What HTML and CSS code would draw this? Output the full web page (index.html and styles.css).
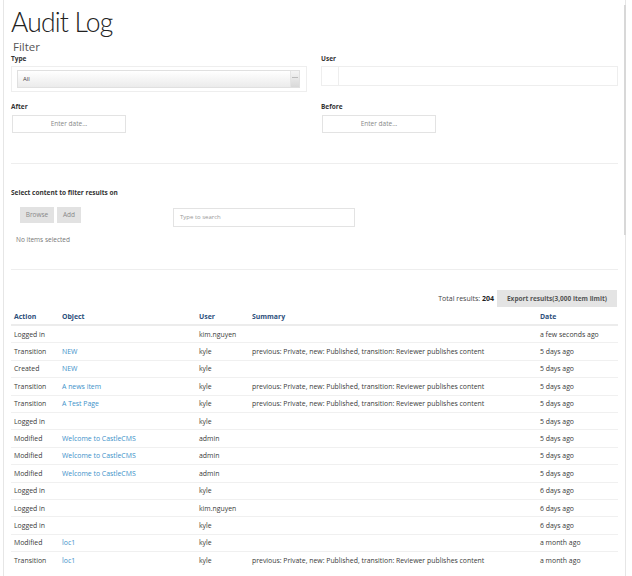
FILE: index.html
```html
<!DOCTYPE html>
<html>
<head>
<meta charset="utf-8">
<link rel="stylesheet" href="styles.css">
</head>
<body>
<div class="page">
  <h1 class="title">Audit Log</h1>
  <div class="filter-head">Filter</div>
  <div class="grid">
    <div class="field">
      <label class="lbl">Type</label>
      <div class="select-wrap">
        <div class="select"><span>All</span><span class="arrow"><span class="caret"></span></span></div>
      </div>
    </div>
    <div class="field">
      <label class="lbl">User</label>
      <div class="user-input"><span class="user-tag"></span></div>
    </div>
    <div class="field f2">
      <label class="lbl">After</label>
      <div class="date">Enter date...</div>
    </div>
    <div class="field f2">
      <label class="lbl">Before</label>
      <div class="date">Enter date...</div>
    </div>
  </div>
  <hr class="rule r1">
  <div class="content-sel">
    <div class="lbl">Select content to filter results on</div>
    <div class="sel-row">
      <div class="btns"><span class="btn b-browse">Browse</span><span class="btn b-add">Add</span></div>
      <div class="search">Type to search</div>
    </div>
    <div class="none">No items selected</div>
  </div>
  <hr class="rule r2">
  <div class="total-row">
    <span class="total">Total results: <b>204</b></span>
    <span class="export">Export results(3,000 item limit)</span>
  </div>
  <table class="log">
    <colgroup><col class="c1"><col class="c2"><col class="c3"><col class="c4"><col class="c5"></colgroup>
    <thead><tr><th>Action</th><th>Object</th><th>User</th><th>Summary</th><th>Date</th></tr></thead>
    <tbody>
      <tr><td>Logged in</td><td></td><td>kim.nguyen</td><td></td><td>a few seconds ago</td></tr>
      <tr><td>Transition</td><td><a>NEW</a></td><td>kyle</td><td>previous: Private, new: Published, transition: Reviewer publishes content</td><td>5 days ago</td></tr>
      <tr><td>Created</td><td><a>NEW</a></td><td>kyle</td><td></td><td>5 days ago</td></tr>
      <tr><td>Transition</td><td><a>A news item</a></td><td>kyle</td><td>previous: Private, new: Published, transition: Reviewer publishes content</td><td>5 days ago</td></tr>
      <tr><td>Transition</td><td><a>A Test Page</a></td><td>kyle</td><td>previous: Private, new: Published, transition: Reviewer publishes content</td><td>5 days ago</td></tr>
      <tr><td>Logged in</td><td></td><td>kyle</td><td></td><td>5 days ago</td></tr>
      <tr><td>Modified</td><td><a>Welcome to CastleCMS</a></td><td>admin</td><td></td><td>5 days ago</td></tr>
      <tr><td>Modified</td><td><a>Welcome to CastleCMS</a></td><td>admin</td><td></td><td>5 days ago</td></tr>
      <tr><td>Modified</td><td><a>Welcome to CastleCMS</a></td><td>admin</td><td></td><td>5 days ago</td></tr>
      <tr><td>Logged in</td><td></td><td>kyle</td><td></td><td>6 days ago</td></tr>
      <tr><td>Logged in</td><td></td><td>kim.nguyen</td><td></td><td>6 days ago</td></tr>
      <tr><td>Logged in</td><td></td><td>kyle</td><td></td><td>6 days ago</td></tr>
      <tr><td>Modified</td><td><a>loc1</a></td><td>kyle</td><td></td><td>a month ago</td></tr>
      <tr><td>Transition</td><td><a>loc1</a></td><td>kyle</td><td>previous: Private, new: Published, transition: Reviewer publishes content</td><td>a month ago</td></tr>
    </tbody>
  </table>
</div>
<div class="scroll-thumb"></div>
</body>
</html>
```
FILE: styles.css
```css
html, body { margin: 0; padding: 0; background: #fff; }
body { font-family: "Open Sans", "Liberation Sans", sans-serif; color: #444; font-size: 7px; height: 576px; overflow: hidden; position: relative; }
.page { margin-left: 3px; width: 607px; padding: 0 7px; border-left: 1px solid #e6e6e6; border-right: 1px solid #e6e6e6; min-height: 576px; box-sizing: content-box; }
.title { margin: 0; padding-top: 6px; font-family: Lato, "Liberation Sans", sans-serif; font-weight: 300; font-size: 26.5px; line-height: 32px; color: #222; letter-spacing: -0.8px; }
.filter-head { margin: 2px 0 0 2px; font-size: 11.5px; line-height: 14px; color: #555; }
.grid { display: grid; grid-template-columns: 296px 297px; column-gap: 14px; }
.lbl { display: block; font-weight: 700; font-size: 6.5px; line-height: 10px; color: #333; }
.field { display: flex; flex-direction: column; }
.f2 { margin-top: 10px; }
.f2 .lbl { margin-bottom: 3px; }
.select-wrap { margin-top: 2px; height: 26px; border: 1px solid #eee; box-sizing: border-box; padding: 3px 6px 3px 5px; }
.select { height: 18px; border: 1px solid #e0e0e0; box-sizing: border-box; background: linear-gradient(#fff, #ebebeb); display: flex; justify-content: space-between; align-items: stretch; font-size: 6px; color: #444; }
.select span:first-child { padding-left: 5px; line-height: 16px; }
.arrow { width: 8px; background: linear-gradient(#f4f4f4, #d9d9d9); border-left: 1px solid #e4e4e4; display: flex; align-items: flex-start; justify-content: center; }
.caret { width: 1px; height: 1px; background: #bbb; margin-top: 6px; }
.user-input { margin-top: 2px; height: 20px; border: 1px solid #eee; box-sizing: border-box; display: flex; }
.user-tag { width: 16px; border-right: 1px solid #eee; }
.date { margin-left: 1px; width: 114px; height: 18px; border: 1px solid #e3e3e3; box-sizing: border-box; text-align: center; font-size: 6.5px; line-height: 16px; color: #888; }
.rule { border: 0; border-top: 1px solid #eee; margin: 0; }
.r1 { margin-top: 30px; }
.content-sel { padding-top: 24px; }
.sel-row { display: flex; margin-top: 9px; }
.btns { display: flex; gap: 3px; margin-left: 9px; width: 153px; }
.btn { height: 16px; line-height: 16px; background: #e2e2e2; color: #888; font-size: 6.5px; text-align: center; }
.b-browse { width: 34px; }
.b-add { width: 24px; }
.search { margin-top: 1px; width: 182px; height: 19px; border: 1px solid #e3e3e3; box-sizing: border-box; font-size: 6px; line-height: 17px; padding-left: 6px; color: #999; }
.none { margin: 6px 0 0 5px; color: #777; font-size: 6.5px; line-height: 14px; }
.r2 { margin-top: 22px; }
.total-row { display: flex; justify-content: flex-end; align-items: center; margin-top: 20px; margin-right: 1px; }
.total { font-size: 7px; color: #444; margin-right: 3px; }
.total b { color: #222; }
.export { height: 17px; line-height: 17px; width: 120px; text-align: center; background: #e4e4e4; color: #555; font-weight: 700; font-size: 6.5px; }
.log { width: 607px; border-collapse: collapse; table-layout: fixed; margin-top: 1px; }
.c1 { width: 48px; } .c2 { width: 137px; } .c3 { width: 53px; } .c4 { width: 288px; } .c5 { width: 81px; }
.log th, .log td { text-align: left; padding: 0 0 0 3px; font-size: 6.9px; white-space: nowrap; overflow: hidden; }
.log th { height: 16px; color: #2c4f7c; font-weight: 700; border-bottom: 2px solid #ececec; }
.log td { height: 16.4px; border-top: 1px solid #f0f0f0; color: #3a3a3a; }
.log a { color: #3d91c9; }
.scroll-thumb { position: absolute; left: 624px; top: 5px; width: 2px; height: 230px; background: #d8d8d8; }
```
